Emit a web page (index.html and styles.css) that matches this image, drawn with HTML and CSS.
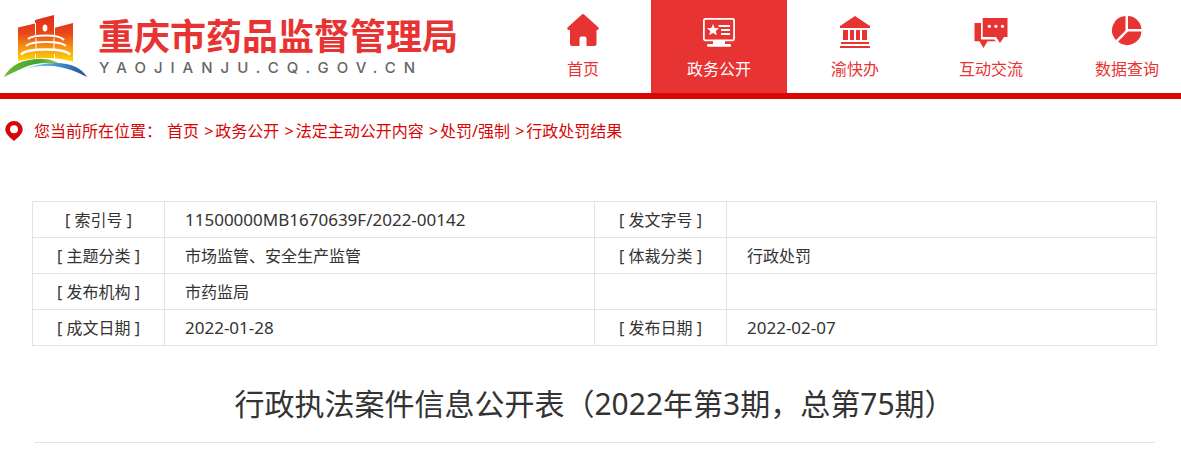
FILE: index.html
```html
<!DOCTYPE html>
<html lang="zh-CN">
<head>
  <meta charset="UTF-8" />
  <meta name="viewport" content="width=device-width, initial-scale=1.0">
  <title>行政执法案件信息公开表（2022年第3期，总第75期）</title>
  <link rel="stylesheet" href="styles.css">
</head>
<body>
  <header class="header">
    <a class="logo" href="#">
      <svg class="logo-mark" viewBox="0 0 84 64" aria-hidden="true">
        <defs>
          <linearGradient id="tower" x1="0" y1="0" x2="0" y2="1">
            <stop offset="0" stop-color="#e02a1c" />
            <stop offset="0.4" stop-color="#e8481a" />
            <stop offset="0.75" stop-color="#f9a010" />
            <stop offset="1" stop-color="#ffd800" />
          </linearGradient>
          <linearGradient id="grass" x1="0" y1="0" x2="1" y2="0">
            <stop offset="0" stop-color="#6fb92c" />
            <stop offset="0.6" stop-color="#3fa535" />
            <stop offset="1" stop-color="#a8cf4a" />
          </linearGradient>
          <linearGradient id="river" x1="0" y1="0" x2="1" y2="0">
            <stop offset="0" stop-color="#d5ecf8" />
            <stop offset="0.4" stop-color="#58a5d8" />
            <stop offset="1" stop-color="#1c4fa0" />
          </linearGradient>
        </defs>
        <path fill="url(#tower)" d="M14 12.5 L31 8.5 V5 L50 0 V13 L69 8 V46.5 Q44 40 14 46 Z" />
        <g fill="none" stroke="#fff">
          <path stroke-width="1" d="M31.5 8 V20 M50.5 10 V20 M31.5 39 V45 M50.5 39 V45 M32 23 V36 M50 23 V36" />
          <path stroke-width="2" d="M24 24 Q28 20.5 42 20.5 Q56 20.5 60 25" />
          <path stroke-width="2.2" d="M22 31 Q26 27 42 27 Q58 27 62 31" />
          <path stroke-width="2.6" d="M17 39.5 Q22 34.5 42 34.5 Q61 34.5 66 39.5" />
        </g>
        <ellipse cx="41" cy="13" rx="2.4" ry="3.6" fill="#fff" />
        <path fill="url(#grass)" d="M0 62 Q10 43 39 44 Q48 44 56 49 Q34 46 19 53 Q8 58 0 62 Z" />
        <path fill="url(#river)" d="M17 55 Q35 48 52 48 Q74 48 83 62 Q66 53 50 51 Q34 50 17 55 Z" />
      </svg>
      <span class="logo-text">
        <strong class="logo-name">重庆市药品监督管理局</strong>
        <span class="logo-domain">YAOJIANJU.CQ.GOV.CN</span>
      </span>
    </a>
    <nav class="nav">
      <a class="nav-item" href="#">
        <svg class="nav-icon" viewBox="0 0 32 36" aria-hidden="true">
          <path fill="currentColor" d="M14.6 1.7 Q16 0.5 17.4 1.7 L31.5 14.6 Q32.3 17 30 17 H29.5 V31 Q29.5 33 27.5 33 H19.5 V25.5 Q19.5 23.5 17.5 23.5 H14.5 Q12.5 23.5 12.5 25.5 V33 H5 Q3 33 3 31 V17 H2 Q-0.3 17 0.5 14.6 Z" />
        </svg>
        <span>首页</span>
      </a>
      <a class="nav-item active" href="#">
        <svg class="nav-icon" viewBox="0 0 32 36" aria-hidden="true">
          <rect x="0.9" y="5.9" width="30.2" height="21.4" rx="1.5" fill="none" stroke="currentColor" stroke-width="1.8" />
          <path fill="currentColor" d="M10 11 L11.7 14.9 L16 15.3 L12.8 18.1 L13.8 22.3 L10 20.1 L6.2 22.3 L7.2 18.1 L4 15.3 L8.3 14.9 Z M10 27 H22 V31 H27 Q28 31 28 32.4 T27 33.8 H5 Q4 33.8 4 32.4 T5 31 H10 Z" />
          <path fill="none" stroke="currentColor" stroke-width="2" d="M15.5 13 H27 M18 17 H27 M18 21 H27" />
        </svg>
        <span>政务公开</span>
      </a>
      <a class="nav-item" href="#">
        <svg class="nav-icon" viewBox="0 0 32 36" aria-hidden="true">
          <path fill="currentColor" d="M16 3 L31 13 V15 H1 V13 Z M4 17 H9 V27 H4 Z M11 17 H15 V27 H11 Z M17 17 H21 V27 H17 Z M23 17 H28 V27 H23 Z M2 29 H30 V31 H2 Z M1 33 H31 V35 H1 Z" />
        </svg>
        <span>渝快办</span>
      </a>
      <a class="nav-item" href="#">
        <svg class="nav-icon wide" viewBox="0 0 34 36" aria-hidden="true">
          <path fill="currentColor" d="M0.5 10 H7 V26.5 H20 L22 28.3 H13.5 L9.5 35 L5.5 28.3 H0.5 Z" />
          <path fill="currentColor" d="M8.7 5 H33.5 V24 H30 L26 30 L22 24 H8.7 Z" />
          <g fill="#fff"><circle cx="15.3" cy="13.3" r="1.6" /><circle cx="21.9" cy="13.3" r="1.6" /><circle cx="28.5" cy="13.3" r="1.6" /></g>
        </svg>
        <span>互动交流</span>
      </a>
      <a class="nav-item" href="#">
        <svg class="nav-icon" viewBox="0 0 32 36" aria-hidden="true">
          <path fill="currentColor" d="M14.5 3 V17.4 L5 27 A14.2 14.2 0 0 1 14.5 3 Z M17 3 A14.2 14.2 0 0 1 30.5 16 H17 Z M30.5 18.6 A14.4 14.4 0 0 1 7 28.7 L17 18.6 Z" />
        </svg>
        <span>数据查询</span>
      </a>
    </nav>
  </header>

  <nav class="crumbs">
    <svg class="pin" viewBox="0 0 18 20" aria-hidden="true">
      <path fill="currentColor" fill-rule="evenodd" d="M9 0 A8.7 8.3 0 0 1 17.7 8.3 C17.7 13 12.5 17 9 20 C5.5 17 0.3 13 0.3 8.3 A8.7 8.3 0 0 1 9 0 Z M9 4.2 A4 4 0 1 0 9 12.2 A4 4 0 1 0 9 4.2 Z" />
    </svg>
    <span class="crumbs-label">您当前所在位置：</span>
    <div>
      <a href="#">首页</a>
      <span class="sep">&gt;</span><a href="#">政务公开</a>
      <span class="sep">&gt;</span><a href="#">法定主动公开内容</a>
      <span class="sep">&gt;</span><a href="#">处罚/强制</a>
      <span class="sep">&gt;</span><a href="#">行政处罚结果</a>
    </div>
  </nav>

  <main class="content">
    <table class="info">
      <tr>
        <th scope="row">[ 索引号 ]</th>
        <td class="num">11500000MB1670639F/2022-00142</td>
        <th scope="row">[ 发文字号 ]</th>
        <td></td>
      </tr>
      <tr>
        <th scope="row">[ 主题分类 ]</th>
        <td>市场监管、安全生产监管</td>
        <th scope="row">[ 体裁分类 ]</th>
        <td>行政处罚</td>
      </tr>
      <tr>
        <th scope="row">[ 发布机构 ]</th>
        <td>市药监局</td>
        <th></th>
        <td></td>
      </tr>
      <tr>
        <th scope="row">[ 成文日期 ]</th>
        <td class="num">2022-01-28</td>
        <th scope="row">[ 发布日期 ]</th>
        <td class="num">2022-02-07</td>
      </tr>
    </table>
    <h1 class="title">行政执法案件信息公开表（2022年第3期，总第75期）</h1>
  </main>
</body>
</html>
```

FILE: styles.css
```css
body {
  margin: 0;
  background: #fff;
  color: #333;
  font-family: "Noto Sans", "Noto Sans CJK SC", sans-serif;
  font-size: 16px;
  line-height: 24px;
  overflow-x: hidden;
}

a {
  color: inherit;
  text-decoration: none;
}

.header {
  display: flex;
  justify-content: space-between;
  border-bottom: 6px solid #d80606;
  overflow: hidden;
}

/* logo */
.logo {
  display: flex;
  flex-shrink: 0;
  padding: 15px 0 0 4px;
}

.logo-mark {
  width: 84px;
  height: 64px;
}

.logo-text {
  display: flex;
  flex-direction: column;
  gap: 6px;
  padding-left: 10px;
}

.logo-name {
  color: #e83333;
  font-family: "Noto Sans CJK SC", sans-serif;
  font-size: 36px;
  line-height: 38px;
}

.logo-domain {
  color: #666;
  font-family: Inter, sans-serif;
  font-size: 15px;
  font-weight: 500;
  letter-spacing: 8px;
  line-height: 18px;
  padding-left: 1px;
}

/* main menu */
.nav {
  display: flex;
  flex-shrink: 0;
  margin-right: -14px;
}

.nav-item {
  display: flex;
  flex-direction: column;
  align-items: center;
  gap: 8px;
  box-sizing: border-box;
  width: 136px;
  padding: 13px 0 12px;
  color: #e83333;
}

.nav-item.active {
  background: #e83333;
  color: #fff;
}

.nav-icon {
  width: 32px;
  height: 36px;
}

.nav-icon.wide {
  width: 34px;
}

/* breadcrumb */
.crumbs {
  display: flex;
  align-items: center;
  gap: 5px;
  padding: 20px 5px;
  color: #d80606;
}

.pin {
  width: 18px;
  height: 20px;
}

.crumbs-label {
  padding-left: 6px;
}

.sep {
  padding: 0 2px 0 1px;
}

/* document info */
.content {
  padding: 38px 24px 0 32px;
}

.info {
  width: 100%;
  border-collapse: collapse;
  table-layout: fixed;
}

.info th,
.info td {
  box-sizing: border-box;
  height: 36px;
  padding: 0 20px;
  border: 1px solid #e3e3e3;
  text-align: left;
}

.info th {
  width: 132px;
  padding: 0;
  font-weight: normal;
  text-align: center;
}

.info .num {
  font-size: 17px;
}

.title {
  margin: 38px 2px 0;
  padding-bottom: 18px;
  border-bottom: 1px solid #e3e3e3;
  font-size: 30px;
  font-weight: normal;
  line-height: 40px;
  text-align: center;
}
```
